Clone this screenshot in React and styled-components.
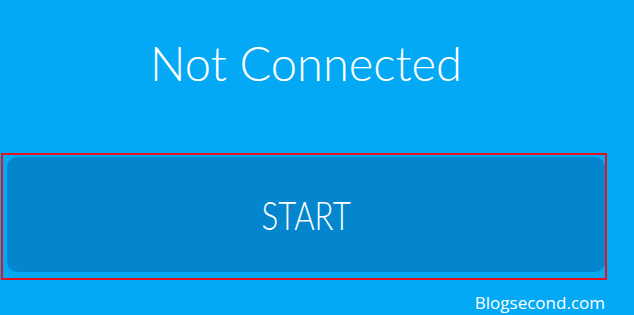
import React from "react";
import styled, { createGlobalStyle } from "styled-components";

const GlobalStyle = createGlobalStyle`
  html, body {
    margin: 0;
    padding: 0;
    background: #03a9f4;
  }
`;

const Page = styled.div`
  width: 634px;
  height: 315px;
  background: #03a9f4;
  display: flex;
  flex-direction: column;
  overflow: hidden;
`;

const Title = styled.h1`
  margin: 0;
  padding-top: 32px;
  width: 612px;
  text-align: center;
  font-family: "Lato", sans-serif;
  font-weight: 300;
  font-size: 47px;
  line-height: 62px;
  color: #ffffff;
`;

const Highlight = styled.div`
  margin: 59px 0 0 1px;
  width: 598px;
  height: 119px;
  border: 2px solid #e8121c;
  padding: 2px 0 2px 4px;
`;

const StartButton = styled.button`
  display: block;
  width: 598px;
  height: 115px;
  border: none;
  border-radius: 10px;
  background: #0386cd;
  color: #ffffff;
  font-family: "Lato", sans-serif;
  font-weight: 300;
  font-size: 40px;
  cursor: pointer;
`;

const Label = styled.span`
  display: inline-block;
  transform: scaleX(0.78);
`;

const Footer = styled.div`
  margin-top: 11px;
  padding-right: 29px;
  text-align: right;
  font-family: "Open Sans", sans-serif;
  font-size: 17px;
  color: #ffffff;
`;

const App = () => {
  return (
    <Page>
      <GlobalStyle />
      <Title>Not Connected</Title>
      <Highlight>
        <StartButton>
          <Label>START</Label>
        </StartButton>
      </Highlight>
      <Footer>Blogsecond.com</Footer>
    </Page>
  );
};

export default App;
